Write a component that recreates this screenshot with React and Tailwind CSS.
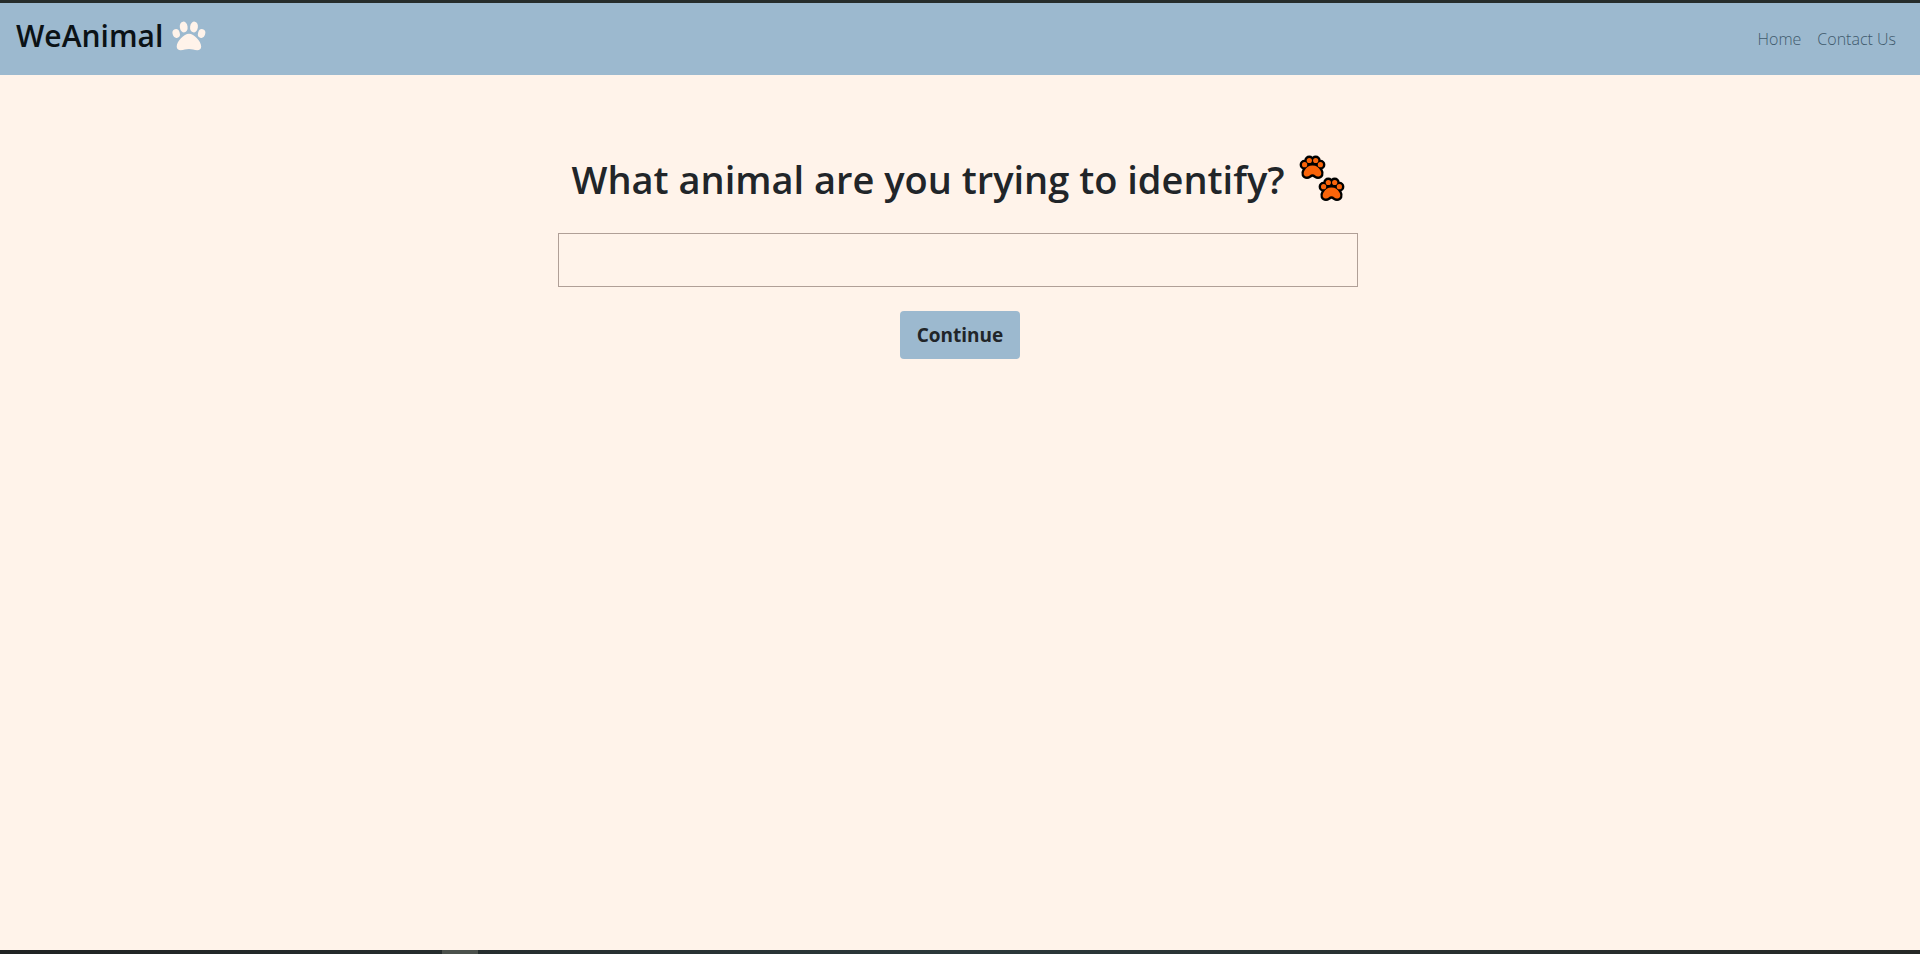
function PawIcon() {
  return (
    <svg viewBox="0 0 36 32" className="h-8 w-9" fill="#fff3ea" aria-hidden="true">
      <ellipse cx="5.2" cy="13.5" rx="3.6" ry="4.4" transform="rotate(-18 5.2 13.5)" />
      <ellipse cx="12.7" cy="7" rx="3.9" ry="5.4" transform="rotate(-8 12.7 7)" />
      <ellipse cx="23" cy="7" rx="3.9" ry="5.4" transform="rotate(8 23 7)" />
      <ellipse cx="30.6" cy="13.5" rx="3.6" ry="4.4" transform="rotate(18 30.6 13.5)" />
      <path d="M18 13.8c5 0 12.2 7.6 12.2 12.7 0 2.500-1.700 3.700-3.900 3.700-3.200 0-5-1.200-8.300-1.200s-5.200 1.200-8.400 1.200c-2.200 0-3.900-1.200-3.900-3.700C5.700 21.400 13 13.800 18 13.800z" />
    </svg>
  );
}

function PawShapes() {
  return (
    <>
      <circle cx="4.6" cy="9.7" r="2.6" />
      <circle cx="9.3" cy="5.5" r="2.6" />
      <circle cx="15.7" cy="5.5" r="2.6" />
      <circle cx="20.4" cy="9.7" r="2.6" />
      <path d="M12.500 10.500C8.500 10.500 6.500 12.500 4.700 15.300C2.600 18.600 4 21.600 7 21.600C9.200 21.600 10.200 19.300 12.500 19.300S15.800 21.600 18 21.600C21 21.600 22.400 18.600 20.300 15.300C18.500 12.500 16.500 10.500 12.500 10.500z" />
    </>
  );
}

function OutlinedPaw({ x, y }) {
  return (
    <g transform={`translate(${x} ${y})`}>
      <g fill="#000" stroke="#000" strokeWidth="4.800" strokeLinejoin="round">
        <PawShapes />
      </g>
      <g fill="#fa640a">
        <PawShapes />
      </g>
    </g>
  );
}

function PawPrints() {
  return (
    <svg viewBox="0 0 48 48" className="size-12 shrink-0" aria-hidden="true">
      <OutlinedPaw x={3} y={0} />
      <OutlinedPaw x={22} y={22} />
    </svg>
  );
}

export default function App() {
  return (
    <div className="flex min-h-screen flex-col border-t-3 border-[#262d2c] bg-[#fff3ea] font-['Open_Sans',sans-serif] text-[#212529]">
      <header className="flex h-[72px] items-center justify-between bg-[#9cb9cf] px-4">
        <a href="#" className="flex items-center gap-2 pb-1.5 text-[30px] leading-12 font-semibold text-[#0b1216]">
          WeAnimal
          <PawIcon />
        </a>
        <nav className="flex gap-4 pr-2 text-base font-light text-[#3f5a6d]">
          <a href="#home">Home</a>
          <a href="#contact">Contact Us</a>
        </nav>
      </header>
      <main className="flex flex-1 flex-col items-center px-4 pt-20">
        <h1 className="flex items-center gap-3 pr-1">
          <label htmlFor="animal" className="text-[38px] leading-12 font-semibold">
            What animal are you trying to identify?
          </label>
          <PawPrints />
        </h1>
        <form className="flex w-full flex-col items-center gap-6 pt-[30px]" onSubmit={(e) => e.preventDefault()}>
          <div className="w-full max-w-[804px] pr-1">
            <input
              id="animal"
              type="text"
              className="block h-[54px] w-full border border-[#b09f97] bg-transparent px-4 text-xl outline-none"
            />
          </div>
          <button type="submit" className="h-12 w-30 rounded bg-[#9cb9cf] text-[19px] font-bold">
            Continue
          </button>
        </form>
      </main>
      <footer className="flex h-1 bg-linear-to-r from-[#202323] via-[#2b383a] to-[#252826]">
        <div className="ml-[23%] w-9 bg-[#4b514c]" />
      </footer>
    </div>
  );
}
